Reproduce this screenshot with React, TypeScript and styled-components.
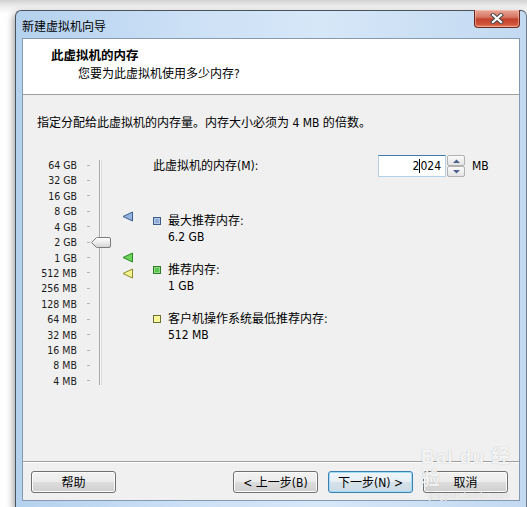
import React from 'react'
import styled, { createGlobalStyle } from 'styled-components'

const GlobalStyle = createGlobalStyle`
    html, body {
        margin: 0;
        padding: 0;
    }
    body {
        background: #fff;
        font-family: Tahoma, "DejaVu Sans Condensed", "Liberation Sans", "Noto Sans CJK SC", sans-serif;
        font-size: 12px;
        color: #000;
    }
`

const ROW = 15.43
const TOP_LOG = 16 // 64 GB = 2^16 MB

const sizes = ['64 GB', '32 GB', '16 GB', '8 GB', '4 GB', '2 GB', '1 GB', '512 MB', '256 MB', '128 MB', '64 MB', '32 MB', '16 MB', '8 MB', '4 MB']

const markers = [
    { mb: 6349, fill: '#93b4de', stroke: '#3a5d93' },
    { mb: 1024, fill: '#6cd35c', stroke: '#2a8a20' },
    { mb: 512, fill: '#f6f48c', stroke: '#8b8a2c' },
]

const info = [
    { label: '最大推荐内存:', value: '6.2 GB', fill: '#8eaed8', border: '#3c5a86' },
    { label: '推荐内存:', value: '1 GB', fill: '#58c64a', border: '#2c7a24' },
    { label: '客户机操作系统最低推荐内存:', value: '512 MB', fill: '#f8f88a', border: '#6f6f2a' },
]

// y of a value on the slider, measured from the top of the slider area
const posOf = (mb: number) => 2.3 + ROW / 2 + (TOP_LOG - Math.log2(mb)) * ROW

const Page = styled.div`
    width: 527px;
    height: 507px;
    overflow: hidden;
    box-sizing: border-box;
    padding: 10px 0 0 15px;
    background: linear-gradient(#d2d2d2 0, #ececec 6px, #fff 14px);
`

const Window = styled.div`
    position: relative;
    width: 512px;
    height: 498px;
    box-sizing: border-box;
    border: 1px solid #4a525c;
    border-right-color: #6f7c8a;
    border-radius: 6px 6px 0 0;
    background: linear-gradient(90deg, #b4d1ee 0%, #cde1f6 35%, #d6e7f8 60%, #c2d9f1 100%);
    box-shadow: -2px 3px 7px rgba(0, 0, 0, 0.35);
    display: flex;
    flex-direction: column;
`

const TitleBar = styled.div`
    height: 27px;
    display: flex;
    align-items: flex-start;
    justify-content: space-between;
    padding: 0 6px 0 6px;
`

const Title = styled.div`
    margin-top: 8px;
    line-height: 16px;
    font-size: 12px;
    color: #000;
`

const CloseButton = styled.div`
    width: 46px;
    height: 18px;
    margin-top: -1px;
    box-sizing: border-box;
    border: 1px solid #6b2a20;
    border-top: none;
    border-radius: 0 0 4px 4px;
    background: linear-gradient(#e9a597 0%, #d77a66 40%, #c2412c 55%, #d2553a 85%, #e58a6c 100%);
    box-shadow: inset 0 0 0 1px rgba(255, 210, 200, 0.45);
    display: flex;
    align-items: center;
    justify-content: center;
`

const Content = styled.div`
    flex: 1;
    margin: 0 6px 6px 6px;
    border: 1px solid #8799b0;
    background: #f0f0f0;
    display: flex;
    flex-direction: column;
`

const Header = styled.div`
    height: 56px;
    box-sizing: border-box;
    background: #fff;
    border-bottom: 1px solid #a0a0a0;
    padding: 9px 0 0 28px;
`

const HeaderTitle = styled.div`
    font-weight: bold;
    line-height: 16px;
    font-size: 12.5px;
`

const HeaderSub = styled.div`
    margin-top: 2px;
    padding-left: 27px;
    line-height: 16px;
`

const Body = styled.div`
    flex: 1;
    padding: 20px 14px 0 14px;
`

const Instruction = styled.div`
    line-height: 16px;
`

const Main = styled.div`
    margin-top: 24px;
    display: flex;
    align-items: flex-start;
`

const Scale = styled.div`
    padding-top: 2.3px;
`

const ScaleRow = styled.div`
    height: ${ROW}px;
    display: flex;
    align-items: center;
`

const ScaleLabel = styled.div`
    width: 40px;
    text-align: right;
    font-size: 10.5px;
    line-height: 12px;
    color: #1a1a1a;
`

const Tick = styled.div`
    width: 3px;
    height: 1px;
    margin-left: 10px;
    background: #b4b4b4;
`

const Track = styled.div`
    position: relative;
    width: 3px;
    height: 225px;
    margin: 5px 0 0 9px;
    box-sizing: border-box;
    border-left: 1px solid #a8a8a8;
    border-right: 1px solid #dcdcdc;
    background: #fbfbfb;
`

const Thumb = styled.svg`
    position: absolute;
    left: -9px;
    width: 20px;
    height: 11px;
`

const MarkerCol = styled.div`
    position: relative;
    width: 51px;
    height: 240px;
`

const Marker = styled.svg`
    position: absolute;
    left: 20px;
    width: 12px;
    height: 11px;
`

const Right = styled.div`
    display: flex;
    flex-direction: column;
`

const MemoryRow = styled.div`
    height: 22px;
    display: flex;
    align-items: center;
`

const MemLabel = styled.div`
    width: 225px;
    line-height: 16px;
`

const TextBox = styled.div`
    width: 68px;
    height: 22px;
    box-sizing: border-box;
    border: 1px solid #b6d0e8;
    border-top-color: #3d7bad;
    background: #fff;
    display: flex;
    align-items: center;
    justify-content: flex-end;
    padding-right: 4px;
    line-height: 16px;
`

const Caret = styled.span`
    display: inline-block;
    width: 1px;
    height: 14px;
    background: #000;
    vertical-align: -2px;
`

const Spinner = styled.div`
    width: 18px;
    height: 22px;
    display: flex;
    flex-direction: column;
    justify-content: space-between;
    margin-left: 1px;
`

const SpinButton = styled.div`
    height: 11px;
    box-sizing: border-box;
    border: 1px solid #b1b1b1;
    border-radius: 2px;
    background: linear-gradient(#fafafa, #e4e4e4);
    display: flex;
    align-items: center;
    justify-content: center;
`

const Unit = styled.div`
    margin-left: 7px;
    line-height: 16px;
`

const InfoList = styled.div`
    margin-top: 36px;
    display: flex;
    flex-direction: column;
    gap: 17px;
`

const InfoItem = styled.div`
    display: flex;
    align-items: flex-start;
`

const Swatch = styled.div<{ $fill: string; $border: string }>`
    width: 8px;
    height: 8px;
    margin-top: 4px;
    box-sizing: border-box;
    border: 1px solid ${p => p.$border};
    background: ${p => p.$fill};
    box-shadow: inset 0 0 0 1px rgba(255, 255, 255, 0.35);
`

const InfoText = styled.div`
    margin-left: 7px;
    line-height: 16px;
`

const Footer = styled.div`
    position: relative;
    border-top: 1px solid #a0a0a0;
    box-shadow: inset 0 1px 0 #fff;
    padding: 9px 11px 7px 8px;
    display: flex;
    gap: 10px;
`

const Button = styled.div<{ $primary?: boolean }>`
    width: 85px;
    height: 22px;
    box-sizing: border-box;
    padding-top: 2px;
    border: 1px solid ${p => (p.$primary ? '#3c7fb1' : '#707070')};
    border-radius: 3px;
    background: ${p =>
        p.$primary
            ? 'linear-gradient(#f0f6fa 0%, #e6eef4 50%, #d6e2ea 50%, #cbdae4 100%)'
            : 'linear-gradient(#f2f2f2 0%, #ebebeb 50%, #dddddd 50%, #cfcfcf 100%)'};
    box-shadow: inset 0 0 0 1px ${p => (p.$primary ? '#9fdcf7' : '#fcfcfc')};
    display: flex;
    align-items: center;
    justify-content: center;
    line-height: 16px;
`

const Spacer = styled.div`
    flex: 1;
`

const Watermark = styled.div`
    position: absolute;
    left: 398px;
    top: -16px;
    color: rgba(255, 255, 255, 0.85);
    text-shadow: 0 0 1px rgba(120, 120, 120, 0.5);
    font-family: "Liberation Sans", "Noto Sans CJK SC", sans-serif;
    pointer-events: none;
`

const WaterBig = styled.div`
    font-size: 19px;
    font-weight: bold;
    line-height: 22px;
    letter-spacing: 1px;
`

const WaterSmall = styled.div`
    font-size: 10px;
    line-height: 12px;
    margin-left: 8px;
`

const App: React.FC = () => {
    const memory = 2024

    return (
        <Page>
            <GlobalStyle />
            <Window>
                <TitleBar>
                    <Title>新建虚拟机向导</Title>
                    <CloseButton>
                        <svg width="14" height="11" viewBox="0 0 14 11">
                            <path d="M3 2 L11 9 M11 2 L3 9" stroke="#4a4a4a" strokeWidth="4.2" strokeLinecap="square" />
                            <path d="M3 2 L11 9 M11 2 L3 9" stroke="#fff" strokeWidth="2.2" strokeLinecap="square" />
                        </svg>
                    </CloseButton>
                </TitleBar>
                <Content>
                    <Header>
                        <HeaderTitle>此虚拟机的内存</HeaderTitle>
                        <HeaderSub>您要为此虚拟机使用多少内存?</HeaderSub>
                    </Header>
                    <Body>
                        <Instruction>指定分配给此虚拟机的内存量。内存大小必须为 4 MB 的倍数。</Instruction>
                        <Main>
                            <Scale>
                                {sizes.map(s => (
                                    <ScaleRow key={s}>
                                        <ScaleLabel>{s}</ScaleLabel>
                                        <Tick />
                                    </ScaleRow>
                                ))}
                            </Scale>
                            <Track>
                                <Thumb viewBox="0 0 20 11" style={{ top: posOf(memory) - 5 - 5.5 }}>
                                    <defs>
                                        <linearGradient id="thumbFill" x1="0" y1="0" x2="0" y2="1">
                                            <stop offset="0" stopColor="#ffffff" />
                                            <stop offset="0.5" stopColor="#ececec" />
                                            <stop offset="1" stopColor="#d2d2d2" />
                                        </linearGradient>
                                    </defs>
                                    <path d="M0.5 5.5 L5 1 Q5.5 0.5 6.5 0.5 L18 0.5 Q19.5 0.5 19.5 2 L19.5 9 Q19.5 10.5 18 10.5 L6.5 10.5 Q5.5 10.5 5 10 Z" fill="url(#thumbFill)" stroke="#7a7a7a" />
                                </Thumb>
                            </Track>
                            <MarkerCol>
                                {markers.map(m => (
                                    <Marker key={m.mb} viewBox="0 0 12 11" style={{ top: posOf(m.mb) - 5.5 }}>
                                        <path d="M1 5.5 L10.5 1 L10.5 10 Z" fill={m.fill} stroke={m.stroke} strokeLinejoin="round" />
                                    </Marker>
                                ))}
                            </MarkerCol>
                            <Right>
                                <MemoryRow>
                                    <MemLabel>此虚拟机的内存(M):</MemLabel>
                                    <TextBox>
                                        2<Caret />024
                                    </TextBox>
                                    <Spinner>
                                        <SpinButton>
                                            <svg width="7" height="4" viewBox="0 0 7 4"><path d="M0 4 L3.5 0.5 L7 4 Z" fill="#4d5f8c" /></svg>
                                        </SpinButton>
                                        <SpinButton>
                                            <svg width="7" height="4" viewBox="0 0 7 4"><path d="M0 0 L3.5 3.5 L7 0 Z" fill="#4d5f8c" /></svg>
                                        </SpinButton>
                                    </Spinner>
                                    <Unit>MB</Unit>
                                </MemoryRow>
                                <InfoList>
                                    {info.map(i => (
                                        <InfoItem key={i.label}>
                                            <Swatch $fill={i.fill} $border={i.border} />
                                            <InfoText>
                                                <div>{i.label}</div>
                                                <div>{i.value}</div>
                                            </InfoText>
                                        </InfoItem>
                                    ))}
                                </InfoList>
                            </Right>
                        </Main>
                    </Body>
                    <Footer>
                        <Button>帮助</Button>
                        <Spacer />
                        <Button>&lt; 上一步(B)</Button>
                        <Button $primary>下一步(N) &gt;</Button>
                        <Button>取消</Button>
                        <Watermark>
                            <WaterBig>Bai du 经验</WaterBig>
                            <WaterSmall>jingyan.baidu.com</WaterSmall>
                        </Watermark>
                    </Footer>
                </Content>
            </Window>
        </Page>
    )
}

export default App
